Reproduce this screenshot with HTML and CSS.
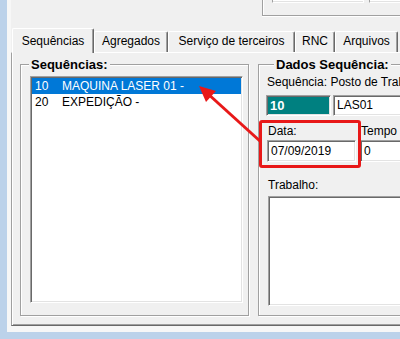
FILE: index.html
```html
<!DOCTYPE html>
<html lang="pt">
<head>
    <meta charset="UTF-8">
    <title>Sequências</title>
    <link rel="stylesheet" href="styles.css">
</head>
<body>
    <div class="window">
        <div class="top">
            <div class="top-group">
                <div class="stub stub-a"></div>
                <div class="stub stub-b"></div>
            </div>
        </div>

        <div class="tabs">
            <div class="tab active">Sequências</div>
            <div class="tab t-agr">Agregados</div>
            <div class="tab t-serv">Serviço de terceiros</div>
            <div class="tab t-rnc">RNC</div>
            <div class="tab t-arq">Arquivos</div>
        </div>

        <div class="panel">
            <fieldset class="group group-seq">
                <legend>Sequências:</legend>
                <div class="listbox">
                    <div class="row selected"><span class="code">10</span>MAQUINA LASER 01 -</div>
                    <div class="row"><span class="code">20</span>EXPEDIÇÃO -</div>
                </div>
            </fieldset>

            <fieldset class="group group-dados">
                <legend>Dados Sequência:</legend>
                <div class="lbl">Sequência: Posto de Trabalho</div>
                <div class="fields fields-seq">
                    <div class="edit edit-seq">10</div>
                    <div class="edit edit-posto">LAS01</div>
                </div>
                <div class="fields fields-data">
                    <div class="col col-data">
                        <div class="lbl">Data:</div>
                        <div class="edit">07/09/2019</div>
                    </div>
                    <div class="col col-tempo">
                        <div class="lbl">Tempo <span class="hint">I</span></div>
                        <div class="edit">0</div>
                    </div>
                </div>
                <div class="lbl lbl-trab">Trabalho:</div>
                <div class="edit memo"></div>
            </fieldset>
        </div>
    </div>

    <!-- anotação -->
    <div class="mark"></div>
    <svg class="arrow" width="400" height="339" viewBox="0 0 400 339">
        <line x1="261" y1="142" x2="207" y2="93" stroke="#e81818" stroke-width="3"/>
        <polygon points="199,86 216,91 206,102" fill="#e81818"/>
    </svg>
</body>
</html>
```

FILE: styles.css
```css
body {
    margin: 0;
    width: 400px;
    height: 339px;
    overflow: hidden;
    position: relative;
    background: #bcd2ea;
    font-family: "Liberation Sans", Arial, sans-serif;
    font-size: 12px;
    color: #000;
}
.window {
    margin-left: 7px;
    width: 393px;
    height: 332px;
    box-sizing: border-box;
    padding-left: 4px;
    background: #f0f0f0;
    box-shadow: inset 4px 0 #f7f7f7, inset 0 -6px #f7f7f7;
    overflow: hidden;
}
.top {
    height: 28px;
}
.top-group {
    margin-left: 251px;
    width: 200px;
    height: 16px;
    box-sizing: border-box;
    border-left: 1px solid #a0a0a0;
    border-bottom: 1px solid #a0a0a0;
    box-shadow: inset 1px 0 #fff, 0 1px #fff;
    display: flex;
    gap: 5px;
    padding-left: 9px;
}
.stub {
    height: 3px;
    box-sizing: border-box;
    border-left: 1px solid #a0a0a0;
    border-right: 1px solid #fff;
    border-bottom: 1px solid #fff;
    box-shadow: inset 0 -1px #e3e3e3;
    background: #fff;
}
.stub-a {
    width: 92px;
}
.stub-b {
    width: 60px;
}
.tabs {
    display: flex;
    align-items: flex-end;
    height: 24px;
    padding-left: 1px;
}
.tab {
    flex: none;
    box-sizing: border-box;
    height: 21px;
    padding-top: 2px;
    line-height: 14px;
    text-align: center;
    white-space: nowrap;
    border-top: 1px solid #fff;
    border-left: 1px solid #fff;
    border-right: 1px solid #696969;
    box-shadow: inset -1px 0 #a0a0a0;
    border-radius: 2px 2px 0 0;
}
.tab.active {
    width: 82px;
    height: 25px;
    padding-top: 5px;
    margin-bottom: -1px;
    position: relative;
    z-index: 1;
    background: #f0f0f0;
}
.t-agr { width: 74px; }
.t-serv { width: 127px; }
.t-rnc { width: 40px; }
.t-arq { width: 63px; }

.panel {
    display: flex;
    gap: 9px;
    height: 274px;
    box-sizing: border-box;
    padding: 4px 0 9px 8px;
    border-top: 1px solid #fff;
    border-left: 1px solid #a0a0a0;
    border-bottom: 1px solid #696969;
    box-shadow: inset 1px 0 #fff, inset 0 -1px #a0a0a0;
}
.group {
    margin: 0;
    padding: 0;
    min-width: 0;
    border: 1px solid #a0a0a0;
    box-shadow: inset 1px 1px #fff, 1px 1px #fff;
}
.group legend {
    padding: 0 2px;
    font-size: 13px;
    font-weight: bold;
    line-height: 15px;
    background: #f0f0f0;
}
.group-seq {
    flex: none;
    width: 229px;
    box-sizing: border-box;
}
.group-seq legend {
    margin-left: 8px;
}
.group-dados {
    flex: none;
    width: 220px;
    box-sizing: border-box;
    padding: 0 0 9px 8px;
}
.group-dados legend {
    margin-left: 7px;
}
.listbox {
    margin: 4px 0 12px 9px;
    width: 213px;
    height: 227px;
    box-sizing: border-box;
    background: #fff;
    border: 1px solid;
    border-color: #a0a0a0 #fff #fff #a0a0a0;
    box-shadow: inset 1px 1px #696969, inset -1px -1px #e3e3e3;
    padding: 1px;
}
.row {
    height: 16px;
    line-height: 16px;
    padding-left: 3px;
    white-space: nowrap;
}
.row.selected {
    background: #0078d7;
    color: #fff;
}
.code {
    display: inline-block;
    width: 27px;
}
.lbl {
    line-height: 14px;
    white-space: nowrap;
}
.group-dados > .lbl:first-of-type {
    margin-top: 3px;
}
.fields {
    display: flex;
    gap: 2px;
}
.fields-seq {
    margin-top: 6px;
    margin-left: -1px;
}
.fields-data {
    margin-top: 8px;
    gap: 4px;
}
.edit {
    height: 21px;
    box-sizing: border-box;
    padding-left: 3px;
    line-height: 19px;
    white-space: nowrap;
    background: #fff;
    border: 1px solid;
    border-color: #a0a0a0 #fff #fff #a0a0a0;
    box-shadow: inset 1px 1px #696969, inset -1px -1px #e3e3e3;
}
.edit-seq {
    width: 65px;
    background: #008080;
    color: #fff;
    font-weight: bold;
    font-size: 13px;
}
.edit-posto {
    width: 100px;
}
.col .lbl {
    margin-bottom: 2px;
    padding-left: 1px;
}
.col .edit {
    height: 22px;
    line-height: 20px;
}
.col-data {
    width: 89px;
}
.col-tempo {
    width: 80px;
}
.hint {
    color: #e8a000;
}
.lbl-trab {
    margin-top: 16px;
    padding-left: 1px;
}
.memo {
    margin-top: 4px;
    margin-left: 1px;
    height: 110px;
}
.mark {
    position: absolute;
    left: 259px;
    top: 120px;
    width: 102px;
    height: 48px;
    box-sizing: border-box;
    border: 3px solid #e81818;
    border-radius: 3px;
}
.arrow {
    position: absolute;
    left: 0;
    top: 0;
    pointer-events: none;
}
```
